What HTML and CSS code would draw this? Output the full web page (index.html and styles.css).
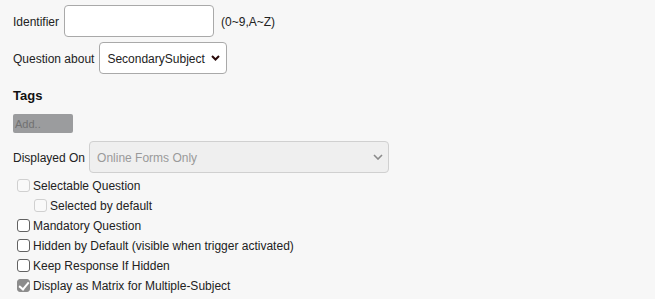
FILE: index.html
```html
<!DOCTYPE html>
<html>
<head>
<meta charset="utf-8">
<link rel="stylesheet" href="styles.css">
</head>
<body>
<div class="form">
  <div class="row row-first">
    <label class="lbl" for="ident">Identifier</label>
    <input class="text-input" id="ident" type="text">
    <span class="hint">(0~9,A~Z)</span>
  </div>
  <div class="row">
    <label class="lbl">Question about</label>
    <div class="select-box select-about">
      <select class="select-native"><option>SecondarySubject</option></select>
      <svg class="chev" width="9" height="6" viewBox="0 0 9 6"><path d="M1 1 L4.5 4.5 L8 1" fill="none" stroke="#2a0a0a" stroke-width="2"/></svg>
    </div>
  </div>
  <h3 class="tags-title">Tags</h3>
  <div class="tag-add">Add..</div>
  <div class="row row-displayed">
    <label class="lbl">Displayed On</label>
    <div class="select-box select-disabled">
      <select class="select-native" disabled><option>Online Forms Only</option></select>
      <svg class="chev" width="10" height="6" viewBox="0 0 10 6"><path d="M1 1 L5 5 L9 1" fill="none" stroke="#8a8a8a" stroke-width="1.6"/></svg>
    </div>
  </div>
  <div class="checks">
    <label class="check"><input class="cb" type="checkbox" disabled>Selectable Question</label>
    <label class="check indent"><input class="cb" type="checkbox" disabled>Selected by default</label>
    <label class="check"><input class="cb" type="checkbox">Mandatory Question</label>
    <label class="check"><input class="cb" type="checkbox">Hidden by Default (visible when trigger activated)</label>
    <label class="check"><input class="cb" type="checkbox">Keep Response If Hidden</label>
    <label class="check"><input class="cb" type="checkbox" checked disabled>Display as Matrix for Multiple-Subject</label>
  </div>
</div>
</body>
</html>
```
FILE: styles.css
```css
html, body {
  margin: 0;
  background: #f7f7f7;
}
body {
  font-family: "Liberation Sans", Arial, sans-serif;
  font-size: 12px;
  color: #222;
}
.form {
  padding: 5px 13px 0 13px;
}
.row {
  display: flex;
  align-items: center;
  height: 32px;
  margin-bottom: 5px;
}
.lbl {
  margin-right: 5px;
  padding-top: 2px;
  white-space: nowrap;
}
.text-input {
  box-sizing: border-box;
  width: 150px;
  height: 32px;
  margin: 0;
  border: 1px solid #a9a9a9;
  border-radius: 4px;
  background: #fff;
  font: inherit;
  padding: 0 6px;
}
.hint {
  margin-left: 7px;
  padding-top: 2px;
}
.select-box {
  box-sizing: border-box;
  display: flex;
  align-items: center;
  height: 32px;
  border: 1px solid #a9a9a9;
  border-radius: 4px;
  background: #fff;
  padding-right: 6px;
}
.select-about {
  width: 128px;
}
.select-native {
  appearance: none;
  -webkit-appearance: none;
  border: none;
  background: transparent;
  font: inherit;
  font-size: 12px;
  color: #222;
  padding: 1px 0 0 7px;
  margin: 0;
  flex: 1;
  min-width: 0;
  height: 30px;
  outline: none;
  opacity: 1;
}
.chev {
  flex: none;
  display: block;
}
.tags-title {
  font-size: 13px;
  font-weight: bold;
  line-height: 16px;
  margin: 14px 0 10px 0;
  color: #111;
}
.tag-add {
  box-sizing: border-box;
  width: 60px;
  height: 19px;
  background: #9b9c9e;
  border-radius: 2px;
  font-size: 11px;
  color: #717171;
  padding: 4px 0 0 2px;
  margin-bottom: 8px;
}
.row-displayed {
  margin-bottom: 3px;
}
.row-displayed .lbl {
  margin-right: 4px;
}
.select-disabled {
  width: 300px;
  background: #efefef;
  border-color: #d0d0d0;
  padding-right: 5px;
}
.select-disabled .select-native {
  color: #9a9a9a;
  padding-left: 7px;
}
.checks {
  display: flex;
  flex-direction: column;
}
.check {
  display: flex;
  align-items: center;
  height: 20px;
  white-space: nowrap;
}
.cb {
  appearance: none;
  -webkit-appearance: none;
  box-sizing: border-box;
  position: relative;
  flex: none;
  margin: 2px 3px 3px 4px;
  width: 13px;
  height: 13px;
  border: 1px solid #626262;
  border-radius: 3px;
  background: #fff;
}
.cb:disabled {
  border-color: #d0d0d0;
  background: #f9f9f9;
}
.cb:checked:disabled {
  border-color: #8c8c8c;
  background: #8c8c8c;
}
.cb:checked::after {
  content: "";
  position: absolute;
  left: 3px;
  top: 0px;
  width: 4px;
  height: 8px;
  border: solid #fff;
  border-width: 0 2px 2px 0;
  transform: rotate(40deg);
}
.indent {
  padding-left: 17px;
}
```
